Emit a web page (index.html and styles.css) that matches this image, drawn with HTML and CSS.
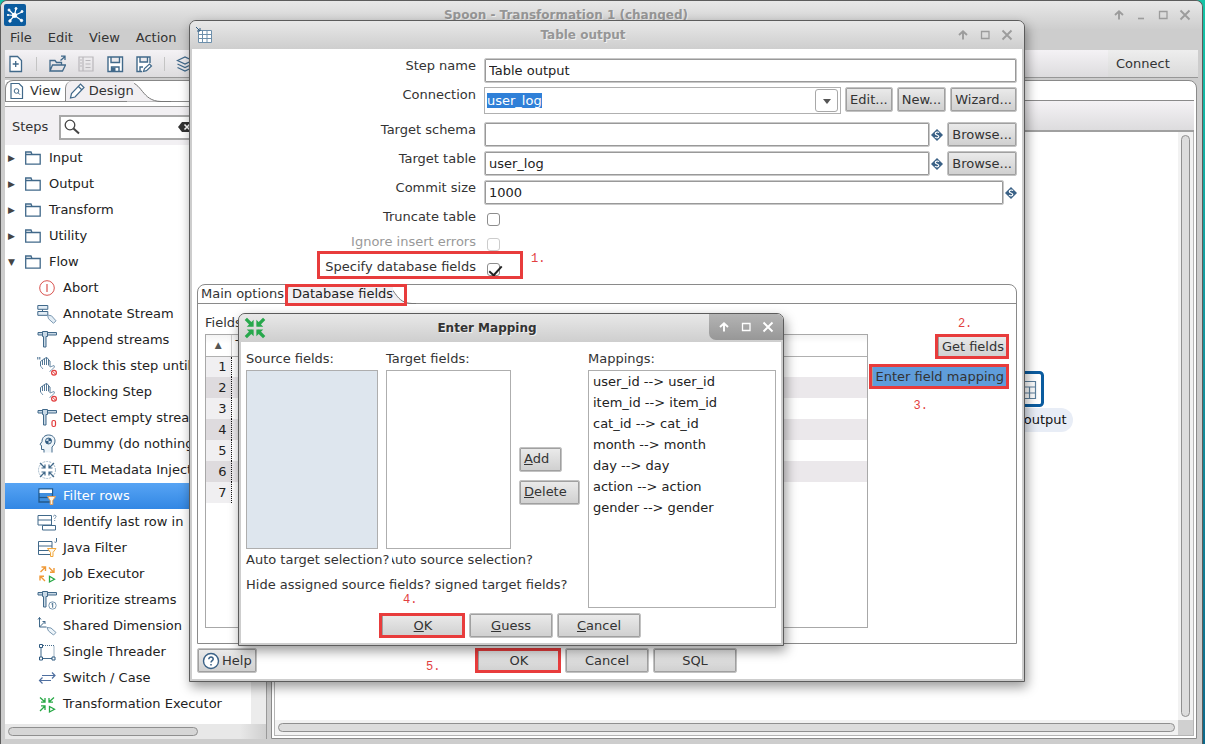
FILE: index.html
```html
<!DOCTYPE html>
<html lang="en">
<head>
<meta charset="utf-8">
<title>Spoon - Transformation 1 (changed)</title>
<link rel="stylesheet" href="styles.css">
</head>
<body>
<svg class="defs" aria-hidden="true">
  <symbol id="folder" viewBox="0 0 18 16"><path d="M1.7 3.5V14.2H16.2V4.5H8L7 2H1.7V4.5H8" fill="none" stroke="#41698a" stroke-width="1.3"/></symbol>
  <symbol id="abort" viewBox="0 0 20 20"><circle cx="10" cy="10" r="7.3" fill="#fff" stroke="#d9534f"/><path d="M10 6v8" stroke="#d9534f" stroke-width="1.2"/></symbol>
  <symbol id="annotate" viewBox="0 0 20 20"><g fill="#e3edf5" stroke="#41698a"><path d="M.8 1.5h10v3.8H.8zM.8 7.5h10v3.8H.8z"/><path d="M5.5 5.5v2" /><path d="M10.500 11l4 .8 4.500 5-2.500 2.500-5-4.500z" stroke="#7a98b1"/></g></symbol>
  <symbol id="append" viewBox="0 0 20 20"><g fill="#c9d9e6" stroke="#41698a"><path d="M1 2.500h18.500v2.500H1z"/><path d="M5.500 1.500h5v5h-1.500V17h-2.500V6.500h-1z"/></g></symbol>
  <symbol id="hand" viewBox="0 0 20 20"><path d="M3.500 10V5.500L5.500 4v5M5.500 4l2-1.500V9M7.500 2.500l2-1V9M9.500 1.500l2 1.500v6.500M11.500 4l1.500 1v6" fill="none" stroke="#41698a" stroke-width=".9"/><path d="M3.500 10l2.500 3M13 11l4-1.500.5 1.500-3.500 3.500-1.500 1" fill="none" stroke="#7a98b1"/><circle cx="17" cy="16.700" r="2.400" fill="#fff" stroke="#e23c3c" stroke-width="1.200"/><path d="M15.500 15.200l3 3" stroke="#e23c3c"/></symbol>
  <symbol id="quotes" viewBox="0 0 20 20"><path d="M.8 1v2.500M2.800 1v2.500" stroke="#41698a"/><use href="#hand"/></symbol>
  <symbol id="detect" viewBox="0 0 20 20"><use href="#append"/><rect x="15" y="12.500" width="3.500" height="6" rx="1.500" fill="#fff" stroke="#e23c3c" stroke-width="1.200"/></symbol>
  <symbol id="dummy" viewBox="0 0 20 20"><path d="M7 18.500v-3H4.500v-4L3 10.500l2-3C5 3.500 8 1 11.500 1c4 0 6.500 2.500 6.500 6 0 3-1.500 4.500-3 6v5.500" fill="#edf4f9" stroke="#41698a"/><circle cx="11.500" cy="7" r="3" fill="#c9d9e6" stroke="#41698a"/><path d="M11.500 7V4a3 3 0 0 1 3 3zM11.500 7v3a3 3 0 0 1-3-3z" fill="#2f5a80"/></symbol>
  <symbol id="etl" viewBox="0 0 20 20"><circle cx="10" cy="10" r="8.500" fill="none" stroke="#9fb6c8" stroke-dasharray="2 1"/><path d="M3 3l5 5M8 4.500V8H4.500M17 3l-5 5M12 4.500V8h3.500M3 17l5-5M8 15.500V12H4.500M17 17l-5-5M12 15.500V12h3.500" fill="none" stroke="#41698a" stroke-width="1.200"/></symbol>
  <symbol id="filter" viewBox="0 0 20 20"><path d="M2 3h13.500v13H2z" fill="#3f8fdf" stroke="#23598a" stroke-width="1.300"/><path d="M2.500 3.500H15V7H2.500z" fill="#fff"/><path d="M2 11.500h13" stroke="#23598a" stroke-width="1.200"/><path d="M10.500 10.500h8l-2.700 4v4h-2.600v-4z" fill="#fff3df" stroke="#e6a057"/></symbol>
  <symbol id="identify" viewBox="0 0 20 20"><path d="M1 3.500h13.500v9.500H1zM1 8h13.500M5.500 13.500v4.500h13v-4.500z" fill="#fff" stroke="#41698a"/><path d="M16.500 4.500c0-2 3-1.500 2.500.2-.3 1-1.300 1-1.300 2.300M17.700 8v1" fill="none" stroke="#6e8ca6"/></symbol>
  <symbol id="java" viewBox="0 0 20 20"><path d="M1.500 3.500h13.500v13H1.500zM1.500 8h13.500M1.500 12.500h13.500" fill="#fff" stroke="#41698a"/><path d="M19.500 0v3.500c0 1-1 1-2 .5" fill="none" stroke="#41698a"/><path d="M10.500 10.500h8.500l-3 4v4h-2.500v-4z" fill="#fff8ea" stroke="#f0a63c"/></symbol>
  <symbol id="job" viewBox="0 0 20 20"><path d="M3.500 8L8 3.500M4.500 3H8.500V7M12 3.500L16.500 8M17 4v4.200h-4M8 17l-4.500-4.500M3 16.500v-4.200h4" fill="none" stroke="#f09a38" stroke-width="1.400"/><path d="M12.500 12.300l5 2.900-5 2.800z" fill="none" stroke="#27a845" stroke-width="1.300"/></symbol>
  <symbol id="prioritize" viewBox="0 0 20 20"><use href="#append"/><circle cx="15.500" cy="15.500" r="3.700" fill="#fff" stroke="#7a98b1"/><path d="M14.500 14l1.200-.8v4.500" fill="none" stroke="#41698a"/></symbol>
  <symbol id="shared" viewBox="0 0 20 20"><path d="M2.500 1.500v9.500h7M1 3.500L2.500 1.500 4 3.500M2.500 11L8 5.500M5.500 5.500H8V8" fill="none" stroke="#41698a"/><path d="M10 11.500l4 .5 5 4.500-2.500 2.500-5-4z" fill="#edf4f9" stroke="#7a98b1"/></symbol>
  <symbol id="thread" viewBox="0 0 20 20"><path d="M4 4.500v12M4 16.500h12" stroke="#41698a"/><path d="M4 3.500h13v13" fill="none" stroke="#41698a" stroke-dasharray="1 1"/><g fill="#fff" stroke="#2f5a80"><path d="M2.500 2.500h3v3h-3zM2.500 15h3v3h-3zM15 15h3v3h-3z"/></g></symbol>
  <symbol id="switch" viewBox="0 0 20 20"><path d="M5 7.500h13M15 4.500l3 3-3 3M14 12.500H2.500M5.500 9.500l-3 3 3 3" fill="none" stroke="#4f6fa0" stroke-width="1.200"/></symbol>
  <symbol id="trans" viewBox="0 0 20 20"><path d="M3 3.500L8 8M8 4v4.200H4M17 3.500L12 8M12 4v4.200h4M3 17l5-5M8 16v-4.200H4" fill="none" stroke="#27a845" stroke-width="1.300"/><path d="M12.500 12.500l5 2.700-5 2.800z" fill="none" stroke="#27a845" stroke-width="1.300"/></symbol>
  <symbol id="diamond" viewBox="0 0 12 12"><path d="M6 0l6 6-6 6-6-6z" fill="#3a6186"/><path d="M8 3.700C7 2.500 4.300 2.900 4.300 4.500c0 1.700 3.500 1.200 3.500 3 0 1.600-2.800 1.800-3.800.5" fill="none" stroke="#fff" stroke-width="1.200"/></symbol>
  <symbol id="up" viewBox="0 0 12 12"><path d="M6 10.500V3M2 6l4-3.800L10 6" fill="none" stroke="currentColor" stroke-width="1.900"/></symbol>
  <symbol id="min" viewBox="0 0 12 12"><path d="M3 9.500h6" stroke="currentColor" stroke-width="1.600"/></symbol>
  <symbol id="max" viewBox="0 0 12 12"><path d="M2.500 2.500h7.500v7h-7.500z" fill="none" stroke="currentColor" stroke-width="1.300"/></symbol>
  <symbol id="close" viewBox="0 0 12 12"><path d="M1.500 1.500l9 9M10.500 1.500l-9 9" stroke="currentColor" stroke-width="1.900"/></symbol>
  <symbol id="gridicon" viewBox="0 0 18 18"><path d="M3.500 4.500h13v12h-13zM3.500 8.500h13M3.500 12.500h13M7.500 4.500v12M12 4.500v12" fill="#fff" stroke="#6d8fab"/><path d="M1 1l4 4M5 2v3H2" fill="none" stroke="#2f5a80"/></symbol>
</svg>

<main class="window app">
  <header class="titlebar">
    <svg class="logo" viewBox="0 0 22 22"><rect width="22" height="22" rx="2" fill="#0b5c9f"/><g stroke="#fff" fill="#fff"><path d="M10.500 11.500L5 6M10.500 11.500l1.500-7M10.500 11.500L18 8M10.500 11.500L17 16M10.500 11.500L6 16.500M10.500 11.500l-6-.5" stroke-width="1.200"/><circle cx="10.500" cy="11.300" r="2.200"/><circle cx="5" cy="6" r="1"/><circle cx="12" cy="4.500" r="1"/><circle cx="18" cy="7.500" r="1"/><circle cx="17.500" cy="16.500" r="1.200"/><circle cx="6" cy="17" r="1.200"/><circle cx="4" cy="11" r=".7"/></g></svg>
    <h1 class="caption">Spoon - Transformation 1 (changed)</h1>
    <div class="controls">
      <button aria-label="Shade"><svg><use href="#up"/></svg></button>
      <button aria-label="Minimize"><svg><use href="#min"/></svg></button>
      <button aria-label="Maximize"><svg><use href="#max"/></svg></button>
      <button aria-label="Close"><svg><use href="#close"/></svg></button>
    </div>
  </header>
  <nav class="menubar"><button>File</button><button>Edit</button><button>View</button><button>Action</button></nav>
  <div class="toolbar">
    <button aria-label="New"><svg viewBox="0 0 18 18"><path d="M3 1.500h7.500L14.500 5.500v11H3z" fill="#fff" stroke="#41698a" stroke-width="1.300"/><path d="M8.700 6v6M5.700 9h6" stroke="#41698a" stroke-width="1.300"/></svg></button>
    <i class="sep"></i>
    <button aria-label="Open"><svg viewBox="0 0 18 18"><path d="M2 16V5.500h5l1.500 2h5V10M2 16l2.500-6h13L14.500 16zM12.500 5.500L17 1.500M13 1.200h4V5" fill="none" stroke="#41698a" stroke-width="1.300"/></svg></button>
    <button aria-label="Explore" disabled><svg viewBox="0 0 18 18"><path d="M2 2h14v14H2zM6 2v14M8.500 5.500h5M8.500 9h5M8.500 12.500h5M3 5h2M3 8h2M3 11h2" fill="none" stroke="#b9b7bb" stroke-width="1.200"/></svg></button>
    <button aria-label="Save"><svg viewBox="0 0 18 18"><path d="M2 2h14.500v14.500H2zM5 2v5.500h8.500V2M5.500 16.500v-4.500h7.500v4.500" fill="#fff" stroke="#41698a" stroke-width="1.400"/><path d="M5.500 12.500h4v4h-4z" fill="#41698a"/></svg></button>
    <button aria-label="Save as"><svg viewBox="0 0 18 18"><path d="M7 16.500H2V2h13v6M5 2v5h7.500V2M5 16.500V12h3" fill="#fff" stroke="#41698a" stroke-width="1.400"/><path d="M8.500 16.500l1-3 5-4.500 2 2-5 4.700z" fill="#fff" stroke="#41698a" stroke-width="1.200"/></svg></button>
    <i class="sep"></i>
    <button aria-label="Layers"><svg viewBox="0 0 18 18"><path d="M1.500 5.500L9 2l7.500 3.500L9 9zM1.500 9L9 12.500 16.500 9M1.500 12.500L9 16l7.500-3.500" fill="none" stroke="#41698a" stroke-width="1.300"/></svg></button>
    <button class="connect">Connect</button>
  </div>
  <div class="workspace">
    <section class="sidebar">
      <div class="tabs" role="tablist">
        <button role="tab" class="tab"><svg viewBox="0 0 18 18"><path d="M3 1.500h8l3.500 3.500v11.500H3z" fill="#fff" stroke="#41698a" stroke-width="1.200"/><circle cx="8.500" cy="9" r="2.300" fill="none" stroke="#41698a"/><path d="M10 10.700l2 2" stroke="#41698a"/></svg>View</button>
        <button role="tab" class="tab current" aria-selected="true"><svg viewBox="0 0 18 18"><path d="M2.500 16l1-4.500 9-9.500 3.500 3.500-9 9.500zM10.500 4.500l3 3" fill="#fff" stroke="#41698a" stroke-width="1.200"/></svg>Design</button>
        <svg class="slope" viewBox="0 0 44 21"><path d="M0 .5C16 1 14 20 34 20.500H0z" fill="#f1eff2"/><path d="M0 .5C16 1 14 20 34 20.500H44" fill="none" stroke="#777"/></svg>
      </div>
      <div class="search">
        <label for="steps">Steps</label>
        <div class="searchbox">
          <svg viewBox="0 0 18 18"><circle cx="7" cy="7" r="4.800" fill="none" stroke="#444" stroke-width="1.300"/><path d="M10.500 10.500l5.500 5" stroke="#444" stroke-width="2"/></svg>
          <input id="steps" type="text">
          <svg viewBox="0 0 18 18"><path d="M2 9l4-5h11v10H6z" fill="#333"/><path d="M8.500 6.500l5 5M13.500 6.500l-5 5" stroke="#fff" stroke-width="1.600"/></svg>
        </div>
      </div>
      <div class="treepane">
        <ul class="tree">
          <li><i class="arrow">▶</i><svg><use href="#folder"/></svg>Input</li>
          <li><i class="arrow">▶</i><svg><use href="#folder"/></svg>Output</li>
          <li><i class="arrow">▶</i><svg><use href="#folder"/></svg>Transform</li>
          <li><i class="arrow">▶</i><svg><use href="#folder"/></svg>Utility</li>
          <li><i class="arrow">▼</i><svg><use href="#folder"/></svg>Flow</li>
          <li class="leaf"><svg><use href="#abort"/></svg>Abort</li>
          <li class="leaf"><svg><use href="#annotate"/></svg>Annotate Stream</li>
          <li class="leaf"><svg><use href="#append"/></svg>Append streams</li>
          <li class="leaf"><svg><use href="#quotes"/></svg>Block this step until</li>
          <li class="leaf"><svg><use href="#hand"/></svg>Blocking Step</li>
          <li class="leaf"><svg><use href="#detect"/></svg>Detect empty stream</li>
          <li class="leaf"><svg><use href="#dummy"/></svg>Dummy (do nothing)</li>
          <li class="leaf"><svg><use href="#etl"/></svg>ETL Metadata Injection</li>
          <li class="leaf selected"><svg><use href="#filter"/></svg>Filter rows</li>
          <li class="leaf"><svg><use href="#identify"/></svg>Identify last row in</li>
          <li class="leaf"><svg><use href="#java"/></svg>Java Filter</li>
          <li class="leaf"><svg><use href="#job"/></svg>Job Executor</li>
          <li class="leaf"><svg><use href="#prioritize"/></svg>Prioritize streams</li>
          <li class="leaf"><svg><use href="#shared"/></svg>Shared Dimension</li>
          <li class="leaf"><svg><use href="#thread"/></svg>Single Threader</li>
          <li class="leaf"><svg><use href="#switch"/></svg>Switch / Case</li>
          <li class="leaf"><svg><use href="#trans"/></svg>Transformation Executor</li>
        </ul>
        <div class="vtrack"></div>
      </div>
      <div class="htrack"><i class="thumb"></i></div>
    </section>
    <section class="editor">
      <div class="editortabs"></div>
      <div class="editorbar"></div>
      <div class="canvas">
        <div class="drawing">
          <div class="node">
            <svg class="nodeicon" viewBox="0 0 36 36"><rect x="1.500" y="1.500" width="33" height="33" rx="3" fill="#fff" stroke="#0b5c9f" stroke-width="3"/><path d="M9.500 10.500h18v17h-18zM9.500 16h18M9.500 22h18M15.500 16v11.500M21.500 16v11.500" fill="none" stroke="#5c7f9c" stroke-width="1.200"/></svg>
            <span class="nodename">Table output</span>
          </div>
        </div>
        <div class="vbar"><i></i></div>
        <div class="hbar"><i></i></div>
        <div class="corner"></div>
      </div>
    </section>
  </div>
</main>

<section class="window dialog output">
  <header class="titlebar">
    <svg class="logo" viewBox="0 0 18 18"><use href="#gridicon"/></svg>
    <h2 class="caption">Table output</h2>
    <div class="controls">
      <button aria-label="Shade"><svg><use href="#up"/></svg></button>
      <button aria-label="Maximize"><svg><use href="#max"/></svg></button>
      <button aria-label="Close"><svg><use href="#close"/></svg></button>
    </div>
  </header>
  <form class="form">
    <div class="row"><label for="name">Step name</label><input class="field" id="name" type="text" value="Table output"></div>
    <div class="row"><label for="conn">Connection</label>
      <div class="combo"><select id="conn"><option>user_log</option></select><button type="button" aria-label="Open list"><svg viewBox="0 0 10 10"><path d="M1 3h8L5 8z" fill="#555"/></svg></button></div>
      <button type="button" class="btn">Edit...</button><button type="button" class="btn">New...</button><button type="button" class="btn">Wizard...</button></div>
    <div class="row spaced"><label for="schema">Target schema</label><div class="var"><input class="field" id="schema" type="text"><svg><use href="#diamond"/></svg></div><button type="button" class="btn">Browse...</button></div>
    <div class="row"><label for="table">Target table</label><div class="var"><input class="field" id="table" type="text" value="user_log"><svg><use href="#diamond"/></svg></div><button type="button" class="btn">Browse...</button></div>
    <div class="row"><label for="commit">Commit size</label><div class="var"><input class="field" id="commit" type="text" value="1000"><svg><use href="#diamond"/></svg></div></div>
    <div class="row check"><label for="trunc">Truncate table</label><input type="checkbox" id="trunc"></div>
    <div class="row check off"><label for="ignore">Ignore insert errors</label><input type="checkbox" id="ignore" disabled></div>
    <div class="row check"><label for="spec">Specify database fields</label><input type="checkbox" id="spec" checked><span class="frame specframe"></span><b class="note n1">1.</b></div>
    <div class="folder">
      <div class="foldertabs" role="tablist">
        <button type="button" role="tab">Main options</button>
        <button type="button" role="tab" class="current" aria-selected="true">Database fields<span class="frame tabframe"></span></button>
        <svg class="slope" viewBox="0 0 30 19"><path d="M0 .5C10 3 9 18 26 18.500H0z" fill="#f1eff2"/><path d="M0 .5C10 3 9 18 26 18.500H30" fill="none" stroke="#777"/></svg>
      </div>
      <div class="folderbody">
        <span class="listlabel">Fields to insert:</span>
        <div class="gridpane">
          <table class="grid">
            <thead><tr><th>▲</th><th>Table field</th></tr></thead>
            <tbody>
              <tr><td>1</td><td></td></tr><tr><td>2</td><td></td></tr><tr><td>3</td><td></td></tr><tr><td>4</td><td></td></tr><tr><td>5</td><td></td></tr><tr><td>6</td><td></td></tr><tr><td>7</td><td></td></tr>
            </tbody>
          </table>
        </div>
        <div class="side">
          <span class="marked"><button type="button" class="btn">Get fields</button><b class="note n2">2.</b></span>
          <span class="marked"><button type="button" class="btn active">Enter field mapping</button><b class="note n3">3.</b></span>
        </div>
      </div>
    </div>
    <footer class="actions">
      <button type="button" class="btn help"><svg viewBox="0 0 18 18"><circle cx="9" cy="9" r="7.500" fill="#fff" stroke="#3a6186" stroke-width="1.400"/><path d="M6.800 7.200c0-3 4.600-2.700 4.400 0-.1 1.400-2.200 1.500-2.200 3.300M9 12v1.500" fill="none" stroke="#3a6186" stroke-width="1.500"/></svg>Help</button>
      <div class="group">
        <span class="marked"><button type="button" class="btn wide">OK</button><b class="note n5">5.</b></span>
        <button type="button" class="btn wide">Cancel</button>
        <button type="button" class="btn wide">SQL</button>
      </div>
    </footer>
  </form>
</section>

<section class="window dialog mapping">
  <header class="titlebar">
    <svg class="logo" viewBox="0 0 24 24"><g fill="none" stroke="#27a84c" stroke-width="3.500"><path d="M2 2l7 7M22 2l-7 7M2 22l7-7M22 22l-7-7"/></g><path d="M10.500 3v7.500H3zM13.500 3v7.500H21zM10.500 21v-7.500H3zM13.500 21v-7.500H21z" fill="#27a84c"/></svg>
    <h2 class="caption">Enter Mapping</h2>
    <div class="controls">
      <button aria-label="Shade"><svg><use href="#up"/></svg></button>
      <button aria-label="Maximize"><svg><use href="#max"/></svg></button>
      <button aria-label="Close"><svg><use href="#close"/></svg></button>
    </div>
  </header>
  <div class="mapbody">
    <div class="maptop">
      <div class="mapleft">
        <div class="lists">
          <span>Source fields:</span><span>Target fields:</span><span></span>
          <ul class="list source"></ul>
          <ul class="list"></ul>
          <div class="addremove"><button class="btn"><u>A</u>dd</button><button class="btn"><u>D</u>elete</button></div>
        </div>
        <div class="options auto"><span class="over">Auto target selection?</span><span>Auto source selection?</span></div>
        <div class="options"><span>Hide assigned source fields?</span><span>signed target fields?</span></div>
      </div>
      <div class="mapright">
        <span>Mappings:</span>
        <ul class="list">
          <li>user_id --&gt; user_id</li><li>item_id --&gt; item_id</li><li>cat_id --&gt; cat_id</li><li>month --&gt; month</li><li>day --&gt; day</li><li>action --&gt; action</li><li>gender --&gt; gender</li>
        </ul>
      </div>
    </div>
    <footer class="group">
      <span class="marked"><button class="btn wide"><u>O</u>K</button><b class="note n4">4.</b></span>
      <button class="btn wide"><u>G</u>uess</button>
      <button class="btn wide"><u>C</u>ancel</button>
    </footer>
  </div>
</section>
</body>
</html>
```

FILE: styles.css
```css
* { box-sizing: border-box; }
html, body { height: 100%; }
body {
  margin: 0;
  overflow: hidden;
  background: linear-gradient(#14c4a6, #159aa0 40%, #0d6a8c);
  font: 13px/16px "DejaVu Sans", sans-serif;
  color: #333;
}
button, input, select { font: inherit; color: inherit; margin: 0; }
button { border: 0; background: none; padding: 0; white-space: nowrap; }
ul { list-style: none; margin: 0; padding: 0; }
svg { display: block; flex: none; }
.defs { position: absolute; width: 0; height: 0; }

/* Window frames */
.window {
  position: absolute;
  display: flex;
  flex-direction: column;
  background: #cdcdcd;
  border: 1px solid #5c5c5c;
  border-radius: 7px 7px 0 0;
}
.app { left: 0; right: 2px; top: 0; bottom: 0; padding: 0 4px; border-bottom: 0; }
.dialog { padding: 0 2px 2px; box-shadow: 2px 5px 12px rgba(0, 0, 0, .4); }
.output { left: 189px; right: 180px; top: 20px; bottom: 62px; }
.mapping { left: 238px; right: 421px; top: 313px; bottom: 98px; }
.titlebar {
  display: grid;
  grid-template-columns: 44px 1fr 92px;
  align-items: center;
  height: 28px;
  flex: none;
  margin: 0 -2px;
  padding: 0 5px;
  background: linear-gradient(#e8e8e8, #cecece);
  border-radius: 6px 6px 0 0;
}
.app .titlebar { grid-template-columns: 26px 1fr 92px; margin: 0 -4px; padding: 0 8px 0 3px; }
.logo { width: 22px; height: 22px; }
.output .logo { width: 18px; height: 18px; }
.caption { margin: 0; font-size: 12px; line-height: 16px; text-align: center; color: #969696; text-shadow: 1px 1px #f0f0f0; }
.mapping .caption { color: #333; }
.controls { display: flex; justify-content: flex-end; gap: 10px; padding-right: 3px; color: #9c9c9c; }
.output .controls { padding-right: 6px; }
.controls svg { width: 12px; height: 12px; }
.mapping .controls {
  align-self: start;
  justify-self: end;
  align-items: center;
  width: 74px;
  height: 26px;
  margin-right: -5px;
  padding-right: 9px;
  background: linear-gradient(#b4b4b4, #979797);
  border-radius: 0 6px 0 7px;
  color: #fff;
}

/* Main window chrome */
.menubar { display: flex; gap: 16px; padding: 1px 5px 4px; flex: none; }
.toolbar {
  display: flex;
  align-items: center;
  height: 28px;
  flex: none;
  gap: 11px;
  padding-left: 2px;
  background: linear-gradient(#f4f2f5, #dddcde);
  border-bottom: 1px solid #979797;
}
.toolbar svg { width: 18px; height: 18px; }
.sep { width: 1px; height: 14px; background: #c4c4c4; }
.connect { align-self: stretch; margin-left: auto; width: 90px; padding-left: 8px; text-align: left; background: linear-gradient(#eee, #dadada); }
.workspace { flex: 1; min-height: 0; display: flex; gap: 4px; padding: 2px 1px 5px 0; }
.sidebar { width: 262px; flex: none; display: flex; flex-direction: column; background: #fff; border-right: 1px solid #999; }
.tabs { display: flex; height: 22px; flex: none; border: 1px solid #888; border-right: 0; border-radius: 8px 0 0 0; }
.tab { display: flex; align-items: center; gap: 4px; padding: 0 4px 0 2px; }
.tab svg { width: 18px; height: 18px; }
.tab.current { position: relative; z-index: 1; border-left: 1px solid #888; border-radius: 7px 0 0 0; background: #f1eff2; padding: 0 0 0 2px; gap: 3px; }
.slope { margin-left: -7px; }
.tabs .slope { width: 44px; height: 21px; }
.search { display: flex; align-items: center; gap: 11px; height: 43px; flex: none; padding: 3px 0 0 7px; background: #f2f0f3; border-top: 4px solid #fff; box-shadow: inset 0 1px #999; }
.searchbox { display: flex; align-items: center; flex: 1; height: 25px; padding: 0 70px 0 2px; background: #fff; border: 2px solid #a8a8a8; }
.searchbox svg { width: 18px; height: 18px; }
.searchbox input { flex: 1; min-width: 0; width: 40px; border: 0; padding: 0; }
.treepane { display: flex; flex: 1; min-height: 0; overflow: hidden; }
.tree { flex: 1; min-width: 0; white-space: nowrap; color: #222; }
.tree li { display: flex; align-items: center; height: 26px; gap: 7px; padding-left: 3px; }
.tree svg { width: 18px; height: 16px; }
.tree .arrow { width: 9px; font-size: 9px; font-style: normal; color: #444; }
.tree .leaf { gap: 6px; padding-left: 32px; }
.tree .leaf svg { width: 20px; height: 20px; }
.tree .selected { color: #fff; background: linear-gradient(#57a4f4, #3287e4); }
.vtrack { width: 15px; background: #ececec; }
.htrack { height: 15px; flex: none; padding: 3px 3px 2px; background: linear-gradient(90deg, #e8e8e8 235px, #cfcfcf); }
.thumb { display: block; width: 190px; height: 9px; border: 1px solid #8f8f8f; border-radius: 5px; background: #d6d6d6; }
.editor { flex: 1; min-width: 0; display: flex; flex-direction: column; padding: 0 2px 2px; border: 1px solid #8a8a8a; border-radius: 0 8px 0 0; background: #fff; }
.editortabs { height: 20px; flex: none; border-bottom: 1px solid #8a8a8a; }
.editorbar { height: 31px; flex: none; background: linear-gradient(#f4f2f5, #dddcde); border-bottom: 2px solid #a0a0a0; }
.canvas { flex: 1; min-height: 0; display: grid; grid-template: 1fr 15px / 1fr 15px; border: 1px solid #b5b5b5; border-top: 0; }
.drawing { position: relative; }
.vbar, .hbar { background: #f2f2f2; padding: 3px; display: flex; }
.vbar i, .hbar i { flex: 1; border: 1px solid #8f8f8f; border-radius: 5px; background: #dcdcdc; }
.corner { grid-area: 2 / 2; background: #d0d0d0; }
.hbar { grid-area: 2 / 1; }
.node { position: absolute; left: 705px; top: 239px; display: flex; flex-direction: column; align-items: center; gap: 1px; color: #111; }
.nodeicon { width: 36px; height: 36px; }
.nodename { padding: 4px 6px; border-radius: 12px; background: #e8edf6; }

/* Shared controls */
.btn {
  height: 25px;
  padding: 0 4px;
  border: 1px solid #c2c2c2;
  border-radius: 2px;
  background: linear-gradient(#ebebeb, #cfcfcf);
  box-shadow: inset 0 0 0 1px #a0a0a0;
  color: #333;
}
.btn.wide { width: 84px; }
.btn.active { background: #5f9ddb; }
.field { flex: 1; min-width: 0; height: 25px; padding: 0 4px; border: 1px solid #c8c8c8; border-radius: 2px; background: #fff; box-shadow: inset 0 0 0 1px #999; color: #222; }
.group { display: flex; gap: 4px; }
.marked { position: relative; display: block; }
.marked::after, .frame { content: ""; position: absolute; inset: 0 0 0 -2px; border: 3px solid #e83c3c; pointer-events: none; }
.note { position: absolute; font: 12px/14px "Liberation Mono", monospace; color: #e24040; }

/* Table output */
.form { flex: 1; min-height: 0; display: flex; flex-direction: column; gap: 4px; padding: 9px 5px 6px; background: #fff; }
.row { display: flex; align-items: flex-start; gap: 4px; position: relative; }
.row > label { width: 283px; padding-right: 4px; text-align: right; flex: none; }
.spaced { margin-top: 4px; }
.combo { flex: 1; min-width: 0; display: flex; align-items: center; justify-content: space-between; height: 27px; padding: 0 2px; border: 1px solid #b0b0b0; }
.combo select { appearance: none; height: 15px; line-height: 15px; padding: 0; border: 0; border-radius: 0; background: #2f80d8; color: #fff; }
.combo button { width: 23px; height: 23px; display: grid; place-items: center; border: 1px solid #a8a8a8; border-radius: 3px; }
.combo svg { width: 10px; height: 10px; }
.var { flex: 1; min-width: 0; display: flex; align-items: center; gap: 1px; }
.var svg { width: 12px; height: 12px; }
.check { height: 21px; }
.check input { appearance: none; width: 13px; height: 13px; margin: 4px 0 0 3px; border: 1px solid #8d8d8d; border-radius: 3px; background: #fff; }
.check input:checked { display: grid; }
.check input:checked::after { content: ""; width: 11px; height: 5px; margin: 2px 0 0 1px; border: solid #222; border-width: 0 0 2px 2px; transform: rotate(-48deg); }
.off { color: #999; }
.off input { border-color: #ccc; }
.specframe { inset: -8px auto auto 120px; width: 206px; height: 28px; }
.n1 { left: 334px; top: -7px; }
.folder { flex: 1; min-height: 0; display: flex; flex-direction: column; border: 1px solid #8a8a8a; border-radius: 8px 8px 0 0; }
.foldertabs { display: flex; height: 19px; flex: none; border-bottom: 1px solid #8a8a8a; }
.foldertabs button { padding: 0 3px; }
.foldertabs .current { position: relative; z-index: 1; padding: 0 0 0 4px; border-left: 1px solid #8a8a8a; border-radius: 5px 0 0 0; background: #f1eff2; color: #222; }
.foldertabs .slope { width: 30px; height: 19px; }
.tabframe { inset: -1px -14px -3px -3px; }
.folderbody { flex: 1; min-height: 0; display: grid; grid-template: 30px 1fr / 1fr auto; padding: 0 7px 15px 7px; column-gap: 3px; }
.listlabel { grid-column: 1 / 3; padding-top: 11px; }
.gridpane { border: 1px solid #a8a8a8; overflow: hidden; }
.grid { width: 100%; border-collapse: collapse; table-layout: fixed; color: #222; }
.grid th, .grid td { height: 21px; padding: 0 4px; text-align: right; font-weight: normal; }
.grid th { border-bottom: 1px solid #b0b0b0; background: linear-gradient(#f3f3f3, #fff 40%); text-align: left; }
.grid th:first-child { width: 25px; font-size: 9px; text-align: center; border-right: 1px solid #ccc; color: #555; }
.grid td:first-child { background: #f0eff1; border-right: 1px dotted #111; }
.grid tr:nth-child(even) td { background: #ebe8eb; }
.grid tr:nth-child(even) td:first-child { background: #dedbde; }
.side { display: flex; flex-direction: column; align-items: flex-end; gap: 5px; }
.n2 { left: 21px; top: -17px; }
.n3 { left: 43px; top: 35px; }
.actions { display: grid; grid-template-columns: 1fr auto 1fr; }
.help { justify-self: start; display: flex; align-items: center; gap: 2px; padding: 0 4px; }
.help svg { width: 18px; height: 18px; }
.n5 { left: -51px; top: 12px; }

/* Enter Mapping */
.mapbody { flex: 1; min-height: 0; display: flex; flex-direction: column; align-items: center; gap: 5px; padding: 9px 5px 5px; background: #fff; }
.maptop { flex: 1; min-height: 0; align-self: stretch; display: grid; grid-template-columns: 1fr 188px; gap: 8px; }
.mapleft, .mapright { display: flex; flex-direction: column; min-height: 0; gap: 3px; }
.mapleft { padding-bottom: 15px; }
.lists { flex: 1; min-height: 0; display: grid; grid-template: 16px 1fr / 132px 1fr 61px; gap: 3px 8px; }
.list { border: 1px solid #aeaeae; background: #fff; color: #222; }
.list.source { background: #dee6ee; }
.list li { line-height: 21px; padding-left: 4px; }
.mapright .list { flex: 1; }
.addremove { align-self: center; display: flex; flex-direction: column; align-items: flex-start; gap: 8px; padding-top: 32px; }
.addremove .btn { padding-right: 12px; }
.options { display: flex; gap: 4px; white-space: nowrap; }
.options.auto { display: grid; grid-template-columns: 140px 1fr; gap: 0; margin-bottom: 6px; }
.over { position: relative; z-index: 1; width: max-content; padding-right: 3px; background: #fff; }
.n4 { left: 22px; top: -20px; }
```
